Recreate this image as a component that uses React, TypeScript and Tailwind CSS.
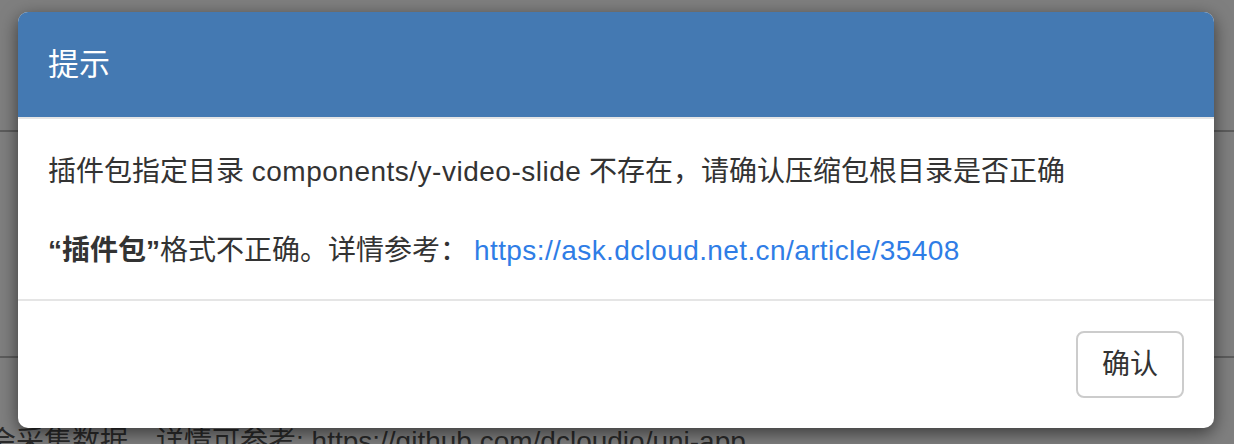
export default function App() {
  const font = { fontFamily: '"Liberation Sans", "Noto Sans CJK SC", sans-serif' };
  return (
    <div
      className="relative w-[1234px] h-[444px] overflow-hidden bg-white text-[#333]"
      style={font}
    >
      {/* page underneath the dialog */}
      <div className="h-[132px] border-b-2 border-[#b8b8b8]" />
      <div className="h-[226px] border-b-2 border-[#b8b8b8]" />
      <div className="pt-[64px] -ml-[12px] text-[28px] leading-[40px] whitespace-nowrap text-[#555]">
        会采集数据，详情可参考: https://github.com/dcloudio/uni-app
      </div>

      {/* backdrop */}
      <div className="absolute inset-0 bg-black/50" />

      {/* dialog */}
      <div className="absolute left-[18px] top-[12px] w-[1196px] rounded-[10px] bg-white overflow-hidden shadow-[0_5px_18px_rgba(0,0,0,0.55)]">
        <div className="bg-[#4479b2] px-[30px] py-[30px] border-b-2 border-[#e5e5e5]">
          <h3 className="text-[31px] leading-[45px] text-white font-normal">提示</h3>
        </div>

        <div className="px-[30px] pt-[33px] pb-[28px] text-[28px] leading-[40px] border-b-2 border-[#e5e5e5]">
          <p>
            插件包指定目录{" "}
            <span className="tracking-[0.5px]">components/y-video-slide</span>{" "}
            不存在，请确认压缩包根目录是否正确
          </p>
          <p className="mt-[39px]">
            <b className="font-bold">“插件包”</b>格式不正确。详情参考：
            <a className="ml-[6px] tracking-[0.4px] text-[#2f7de6]" href="#">
              https://ask.dcloud.net.cn/article/35408
            </a>
          </p>
        </div>

        <div className="flex justify-end px-[30px] py-[30px]">
          <button className="h-[67px] px-[24px] rounded-[8px] border-2 border-[#cccccc] bg-white text-[28px] text-[#333]">
            确认
          </button>
        </div>
      </div>
    </div>
  );
}
